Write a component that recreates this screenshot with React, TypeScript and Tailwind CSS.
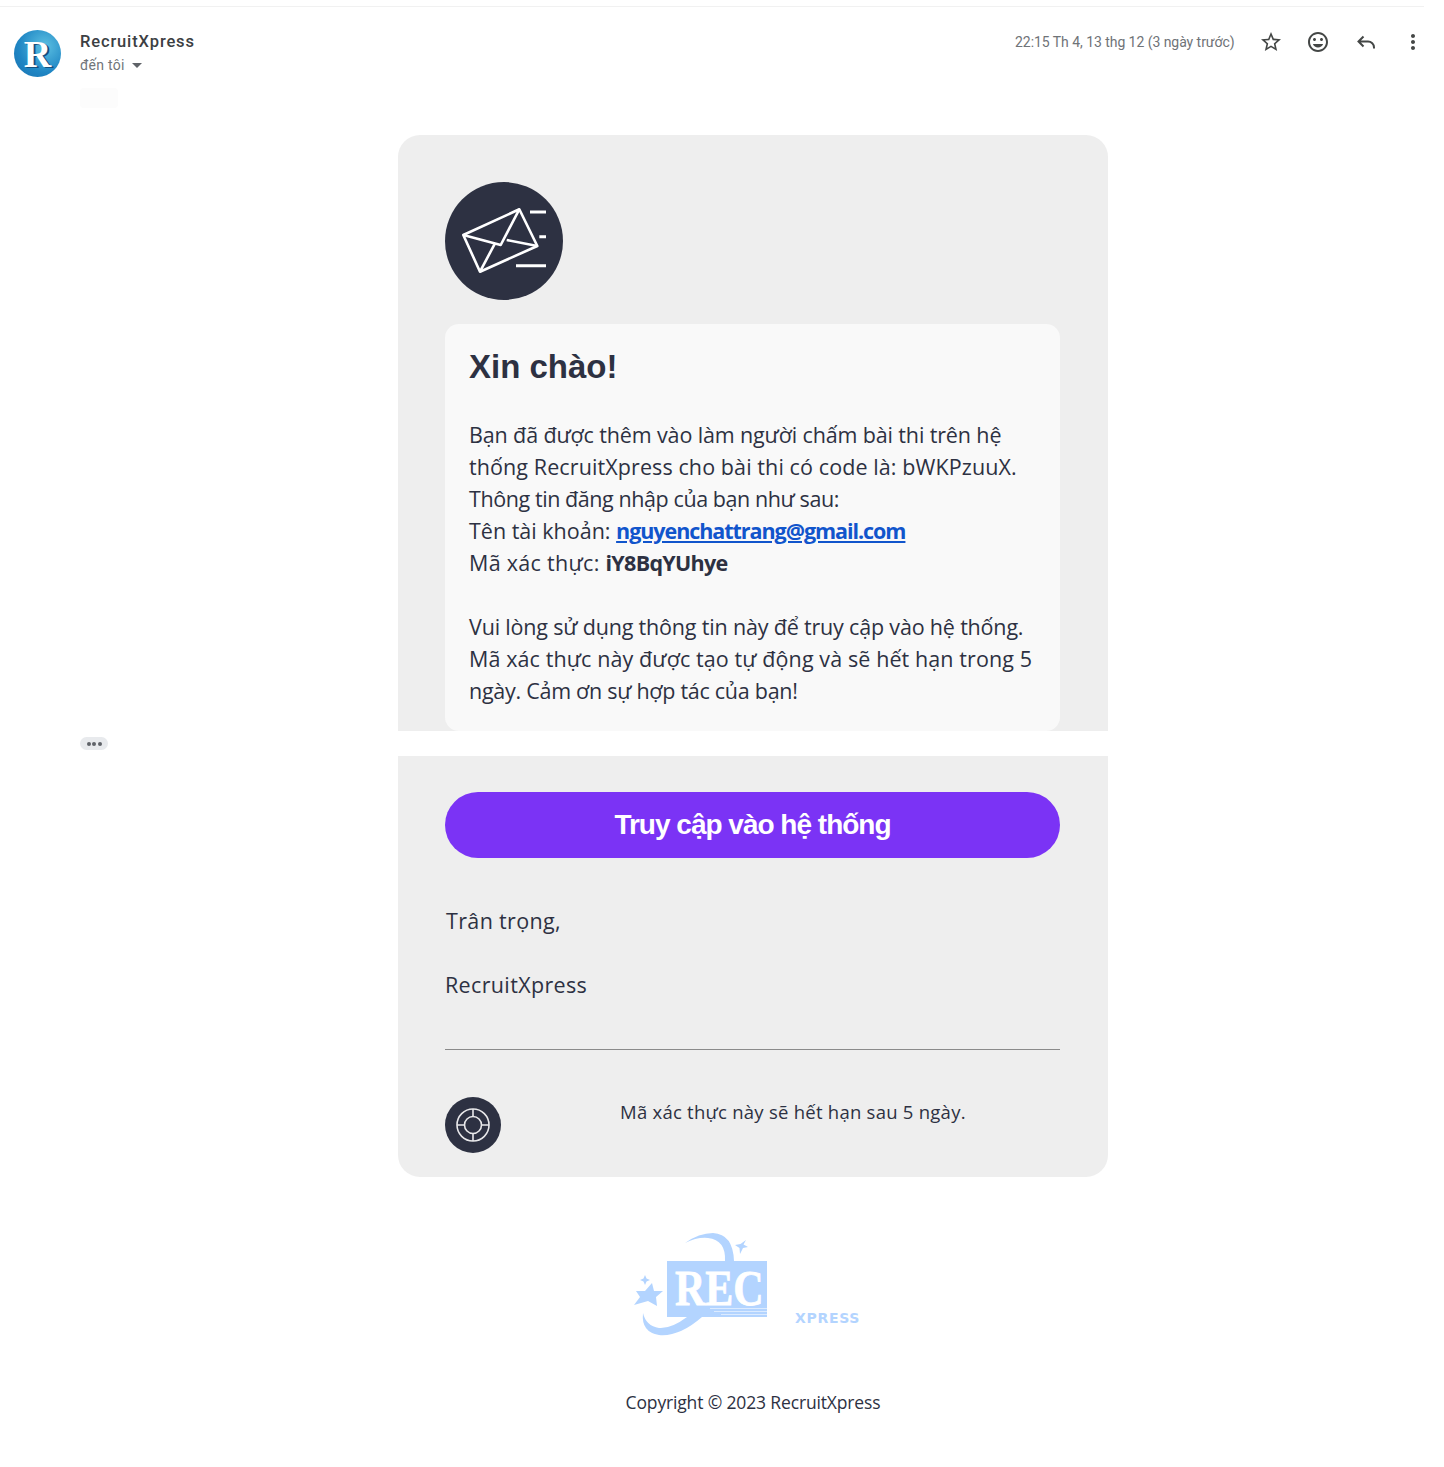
const bodyFont = "font-['Open_Sans',sans-serif]";

function GmailIcon({ d, className = "w-6 h-6" }: { d: string; className?: string }) {
  return (
    <svg viewBox="0 0 24 24" className={className} fill="#444746">
      <path d={d} />
    </svg>
  );
}

function EmailHeader() {
  return (
    <div className="flex items-start justify-between w-[1425px] pl-[14px] pt-[23px] font-['Roboto',sans-serif]">
      <div className="flex items-start gap-[19px]">
        <div className="w-[47px] h-[47px] rounded-full bg-[radial-gradient(circle_at_65%_35%,#5cc0e2,#1f86c4_60%,#1a6fae)] flex items-center justify-center overflow-hidden">
          <span className="text-white text-[38px] leading-none font-bold font-['Liberation_Serif',serif] [text-shadow:2px_1px_0_#14507f]">R</span>
        </div>
        <div className="pt-[1px]">
          <div className="text-[16.5px] leading-[22px] font-medium text-[#3c4043] tracking-[0.85px]">RecruitXpress</div>
          <div className="flex items-center gap-[7px] text-[14px] leading-[24px] text-[#70757a] tracking-[0.25px]">
            đến tôi
            <span className="w-0 h-0 border-x-[5px] border-x-transparent border-t-[5px] border-t-[#5f6368]" />
          </div>
        </div>
      </div>
      <div className="flex items-center h-[24px]">
        <span className="text-[14px] text-[#6f7377] tracking-[-0.05px] mr-[24px]">22:15 Th 4, 13 thg 12 (3 ngày trước)</span>
        <div className="flex items-center gap-[23.5px]">
          <GmailIcon d="M22 9.24l-7.19-.62L12 2 9.19 8.63 2 9.24l5.46 4.73L5.82 21 12 17.27 18.18 21l-1.63-7.03L22 9.24zM12 15.4l-3.76 2.27 1-4.28-3.32-2.88 4.38-.38L12 6.1l1.71 4.04 4.38.38-3.32 2.88 1 4.28L12 15.4z" />
          <GmailIcon d="M11.99 2C6.47 2 2 6.48 2 12s4.47 10 9.99 10C17.52 22 22 17.52 22 12S17.52 2 11.99 2zM12 20c-4.42 0-8-3.58-8-8s3.58-8 8-8 8 3.58 8 8-3.58 8-8 8zm3.5-9c.83 0 1.5-.67 1.5-1.5S16.33 8 15.5 8 14 8.67 14 9.5s.67 1.5 1.5 1.5zm-7 0c.83 0 1.5-.67 1.5-1.5S9.33 8 8.5 8 7 8.67 7 9.5 7.67 11 8.5 11zm3.5 6.5c2.33 0 4.31-1.46 5.11-3.5H6.89c.8 2.04 2.78 3.5 5.11 3.5z" />
          <svg viewBox="0 0 24 24" className="w-6 h-6" fill="none" stroke="#444746" strokeWidth="2">
            <path d="M9.5 6.5 4.5 11.5l5 5M4.5 11.5H14a6 6 0 0 1 6 6v1" />
          </svg>
          <GmailIcon d="M12 8c1.1 0 2-.9 2-2s-.9-2-2-2-2 .9-2 2 .9 2 2 2zm0 2c-1.1 0-2 .9-2 2s.9 2 2 2 2-.9 2-2-.9-2-2-2zm0 6c-1.1 0-2 .9-2 2s.9 2 2 2 2-.9 2-2-.9-2-2-2z" />
        </div>
      </div>
    </div>
  );
}

function EnvelopeBadge() {
  return (
    <div className="w-[118px] h-[118px] rounded-full bg-[#2d3142]">
      <svg viewBox="0 0 118 118" className="w-[118px] h-[118px]" fill="none" stroke="#ffffff" strokeWidth="2.6" strokeLinejoin="round">
        <path d="M18.3 53 74.3 27.3 92.3 64 35 89.7Z" />
        <path d="M18.3 53 55.7 63 74.3 27.3M61.7 58 92.3 64M35 89.7 50 61.3" />
        <path d="M85 30H101M94.3 54.7H101M71 83.7H101" strokeWidth="3" />
      </svg>
    </div>
  );
}

function TargetBadge() {
  return (
    <div className="w-[56px] h-[56px] rounded-full bg-[#2d3142] flex items-center justify-center">
      <svg viewBox="0 0 36 36" className="w-[36px] h-[36px]" fill="none" stroke="#e8e8ea" strokeWidth="1.6">
        <circle cx="18" cy="18" r="16" />
        <circle cx="18" cy="18" r="8.5" />
        <path d="M18 2V9.5M18 26.5V34M2 18H9.5M26.5 18H34" />
      </svg>
    </div>
  );
}

function RecLogo() {
  return (
    <div className="flex items-end pl-[231px]">
      <svg viewBox="0 0 140 110" className="w-[140px] h-[110px] shrink-0" fill="#b3d4ff">
        <path d="M56 11Q70 1 84 1 104 2 105 29H96Q97 8 79 6 68 5 56 11Z" />
        <path d="M14 81Q12 100 30 103 50 105 73 85H58Q42 97 30 96 17 94 14 81Z" />
        <path d="M23 51 25 59 34 59 27 65 28 74 19 69 5 73 11 65 7 59 16 59Z" />
        <path d="M16 43 17.5 46.5 21 48 17.5 49.5 16 53 14.5 49.5 11 48 14.5 46.5Z" />
        <path d="M117 8 114.5 12.5 119 15 114 16 111 22 110.5 16 106 13 111.5 12Z" />
        <rect x="38" y="29" width="100" height="56" />
        <text transform="translate(46 73) scale(1.05 1.25)" fontFamily="'Liberation Serif', serif" fontWeight="bold" fontSize="40" stroke="#ffffff" strokeWidth="0.6" fill="#ffffff">REC</text>
        <path d="M81 76.5H138M85 79.5H138M92 82.5H138" stroke="#dcebff" strokeWidth="1" />
      </svg>
      <span className="ml-[26px] mb-[17px] text-[14px] leading-none font-bold tracking-[0.7px] text-[#b3d4ff] font-['DejaVu_Sans',sans-serif]">XPRESS</span>
    </div>
  );
}

export default function App() {
  return (
    <div className="w-[1444px] h-[1467px] bg-white overflow-hidden">
      <div className="mt-[6px] h-px w-[1424px] bg-[#f1f1f1]" />
      <EmailHeader />

      <div className="flex mt-[58px]">
        <div className="w-[398px] pl-[80px] shrink-0 -mt-[47px]">
          <div className="w-[38px] h-[20px] rounded bg-[#fcfcfc]" />
          <div className="mt-[629px] w-[28px] h-[13px] rounded-full bg-[#e8eaed] flex items-center justify-center gap-[1.5px]">
            <span className="w-[4px] h-[4px] rounded-full bg-[#5f6368]" />
            <span className="w-[4px] h-[4px] rounded-full bg-[#5f6368]" />
            <span className="w-[4px] h-[4px] rounded-full bg-[#5f6368]" />
          </div>
        </div>

        <div className="w-[710px] shrink-0">
          <div className={`bg-[#eeeeee] rounded-t-[22px] pl-[47px] pr-[48px] pt-[47px] h-[596px] overflow-hidden ${bodyFont}`}>
            <EnvelopeBadge />
            <div className="mt-[24px] h-[407px] bg-[#f9f9f9] rounded-[14px] px-[24px] pt-[20px] text-[#2d3142]">
              <h1 className="text-[33px] leading-[46px] font-bold font-['Liberation_Sans',sans-serif]">Xin chào!</h1>
              <div className="mt-[29px] text-[21.5px] leading-[32px] whitespace-nowrap">
                <p className="tracking-[-0.13px]">Bạn đã được thêm vào làm người chấm bài thi trên hệ</p>
                <p className="tracking-[0.1px]">thống RecruitXpress cho bài thi có code là: bWKPzuuX.</p>
                <p className="tracking-[-0.42px]">Thông tin đăng nhập của bạn như sau:</p>
                <p>
                  Tên tài khoản: <a href="#" className="text-[#1155cc] font-bold underline tracking-[-1.05px]">nguyenchattrang@gmail.com</a>
                </p>
                <p className="tracking-[0.3px]">
                  Mã xác thực: <strong className="font-bold tracking-[-0.7px]">iY8BqYUhye</strong>
                </p>
                <p className="mt-[32px] tracking-[-0.18px]">Vui lòng sử dụng thông tin này để truy cập vào hệ thống.</p>
                <p className="tracking-[0.1px]">Mã xác thực này được tạo tự động và sẽ hết hạn trong 5</p>
                <p className="tracking-[-0.27px]">ngày. Cảm ơn sự hợp tác của bạn!</p>
              </div>
            </div>
          </div>

          <div className={`mt-[25px] bg-[#eeeeee] rounded-b-[22px] pl-[47px] pr-[48px] pt-[36px] h-[421px] text-[#2d3142] ${bodyFont}`}>
            <div className="h-[66px] rounded-full bg-[#7b33f5] flex items-center justify-center text-white text-[28px] tracking-[-1px] font-bold font-['Liberation_Sans',sans-serif]">
              Truy cập vào hệ thống
            </div>
            <div className="mt-[47px] text-[21.5px] leading-[32px] tracking-[0.35px]">
              <p className="pl-[1px]">Trân trọng,</p>
              <p className="mt-[32px]">RecruitXpress</p>
            </div>
            <div className="mt-[48px] h-px bg-[#8a8a8a]" />
            <div className="mt-[47px] flex items-start">
              <TargetBadge />
              <p className="ml-[119px] text-[18.5px] leading-[30px] tracking-[0.25px]">Mã xác thực này sẽ hết hạn sau 5 ngày.</p>
            </div>
          </div>

          <div className="mt-[55px] w-[710px]">
            <RecLogo />
          </div>
          <p className={`mt-[47px] text-center text-[17.5px] leading-[26px] tracking-[-0.15px] text-[#2d3142] ${bodyFont}`}>
            Copyright © 2023 RecruitXpress
          </p>
        </div>
      </div>
    </div>
  );
}
